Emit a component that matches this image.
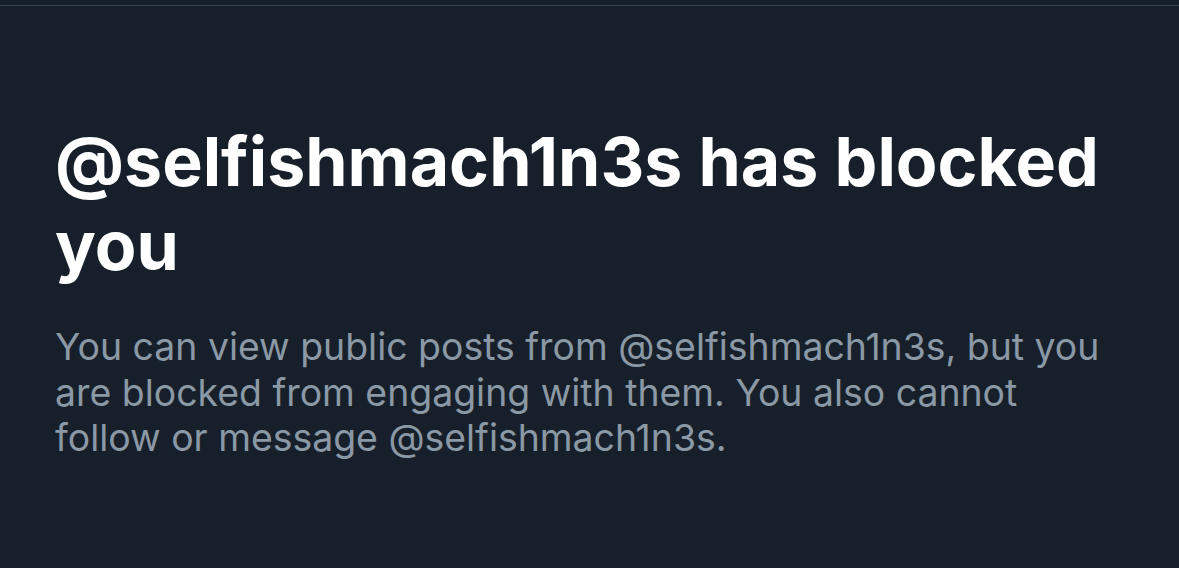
export default function App() {
  return (
    <div className="w-[1179px] h-[568px] bg-[#17202a] overflow-hidden" style={{ fontFamily: 'Inter, "Noto Sans", sans-serif' }}>
      <div className="h-[5px]" />
      <div className="h-px bg-[#3a444e]" />
      <div className="pl-[55px] pr-[70px] pt-[113px]">
        <h1 className="text-[68px] leading-[84px] font-bold text-white tracking-[0px]">
          @selfishmach1n3s has blocked you
        </h1>
        <p className="mt-[37px] text-[37.4px] leading-[45.5px] text-[#8b98a5]">
          You can view public posts from @selfishmach1n3s, but you are blocked from engaging with them. You also cannot follow or message @selfishmach1n3s.
        </p>
      </div>
    </div>
  );
}
